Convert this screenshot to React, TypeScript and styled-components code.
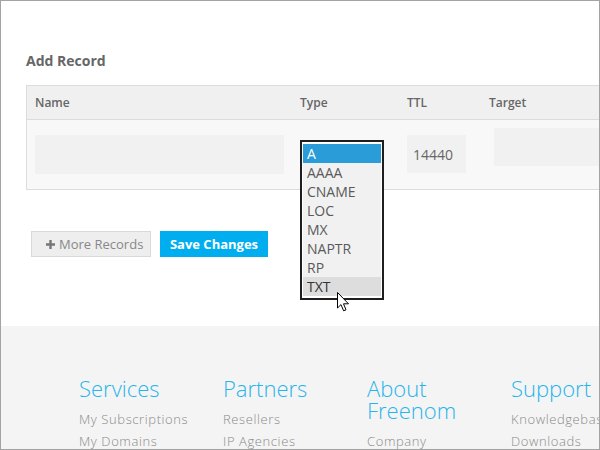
import React from "react";
import styled, { createGlobalStyle } from "styled-components";

const Global = createGlobalStyle`
  html, body { margin: 0; padding: 0; background: #fff; }
  body { font-family: "Open Sans", "Liberation Sans", sans-serif; }
  * { box-sizing: border-box; }
`;

const Frame = styled.div`
  position: relative;
  width: 600px;
  height: 450px;
  border: 1px solid #a3a3a3;
  display: flex;
  flex-direction: column;
  overflow: hidden;
  background: #fff;
`;

const Main = styled.div`
  height: 325px;
  flex: none;
  padding: 51px 0 0 25px;
`;

const Title = styled.h2`
  margin: 0;
  font-size: 14px;
  line-height: 18px;
  font-weight: 700;
  color: #666;
`;

const Table = styled.div`
  margin-top: 15px;
  border: 1px solid #dcdcdc;
  border-right: none;
`;

const Row = styled.div<{ $head?: boolean }>`
  display: grid;
  grid-template-columns: 265px 107px 82px 1fr;
  height: ${(p) => (p.$head ? "34px" : "69px")};
  background: ${(p) => (p.$head ? "#f0f0f0" : "#f8f8f8")};
  border-bottom: ${(p) => (p.$head ? "1px solid #dcdcdc" : "none")};
`;

const HeadCell = styled.div`
  display: flex;
  align-items: center;
  padding-left: 8px;
  font-size: 12px;
  font-weight: 600;
  color: #666;
`;

const Cell = styled.div`
  position: relative;
  min-width: 0;
`;

const Field = styled.div<{ $top: number; $left: number; $w?: number; $h: number }>`
  margin: ${(p) => p.$top}px 0 0 ${(p) => p.$left}px;
  width: ${(p) => (p.$w ? `${p.$w}px` : "auto")};
  height: ${(p) => p.$h}px;
  background: #f1f1f1;
  display: flex;
  align-items: center;
  padding-left: 6px;
  font-size: 14px;
  color: #666;
`;

const ListBox = styled.ul`
  position: absolute;
  top: 20px;
  left: 8px;
  width: 84px;
  margin: 0;
  padding: 2px 1px;
  list-style: none;
  border: 2px solid #1e1e1e;
  background: #fff;
  z-index: 2;
`;

const Option = styled.li<{ $state?: "selected" | "hover" }>`
  height: 19px;
  line-height: 19px;
  padding-left: 4px;
  font-size: 14px;
  color: ${(p) => (p.$state === "selected" ? "#fff" : p.$state === "hover" ? "#333" : "#5a5a5a")};
  background: ${(p) =>
    p.$state === "selected" ? "#2a9dd8" : p.$state === "hover" ? "#dddddd" : "#f1f1f1"};
`;

const Actions = styled.div`
  display: flex;
  gap: 9px;
  margin: 41px 0 0 5px;
`;

const GhostButton = styled.button`
  display: flex;
  align-items: center;
  gap: 4px;
  height: 26px;
  width: 120px;
  padding: 0 0 0 14px;
  border: 1px solid #d9d9d9;
  background: #eeeeee;
  color: #888;
  font-family: inherit;
  font-size: 13px;
`;

const PrimaryButton = styled.button`
  height: 26px;
  width: 108px;
  padding: 0;
  border: none;
  background: #00aeef;
  color: #fff;
  font-family: inherit;
  font-size: 13px;
  font-weight: 700;
`;

const Footer = styled.footer`
  flex: 1;
  background: #f4f4f4;
  display: flex;
  padding: 51px 0 0 78px;
`;

const Column = styled.div`
  width: 144px;
  flex: none;
`;

const ColTitle = styled.h3`
  margin: 0 0 9px;
  font-size: 22px;
  line-height: 22px;
  font-weight: 300;
  color: #27b4ec;
  width: 110px;
`;

const FootLink = styled.div`
  font-size: 13px;
  line-height: 22px;
  font-weight: 300;
  color: #8a8a8a;
  letter-spacing: 0.6px;
  white-space: nowrap;
`;

const Cursor = styled.svg`
  position: absolute;
  left: 336px;
  top: 291px;
  z-index: 5;
`;

const types = ["A", "AAAA", "CNAME", "LOC", "MX", "NAPTR", "RP", "TXT"];

const footer = [
  { title: "Services", links: ["My Subscriptions", "My Domains"] },
  { title: "Partners", links: ["Resellers", "IP Agencies"] },
  { title: "About Freenom", links: ["Company"] },
  { title: "Support", links: ["Knowledgebase", "Downloads"] },
];

export default function App() {
  return (
    <>
      <Global />
      <Frame>
        <Main>
          <Title>Add Record</Title>
          <Table>
            <Row $head>
              <HeadCell>Name</HeadCell>
              <HeadCell>Type</HeadCell>
              <HeadCell>TTL</HeadCell>
              <HeadCell>Target</HeadCell>
            </Row>
            <Row>
              <Cell>
                <Field $top={15} $left={8} $w={249} $h={39} />
              </Cell>
              <Cell>
                <ListBox>
                  {types.map((t, i) => (
                    <Option
                      key={t}
                      $state={i === 0 ? "selected" : i === types.length - 1 ? "hover" : undefined}
                    >
                      {t}
                    </Option>
                  ))}
                </ListBox>
              </Cell>
              <Cell>
                <Field $top={15} $left={8} $w={59} $h={38}>14440</Field>
              </Cell>
              <Cell>
                <Field $top={8} $left={13} $h={38} />
              </Cell>
            </Row>
          </Table>
          <Actions>
            <GhostButton>
              <svg width="9" height="9" viewBox="0 0 9 9">
                <path d="M3.3 0h2.4v3.3H9v2.4H5.7V9H3.3V5.7H0V3.3h3.3z" fill="#777" />
              </svg>
              More Records
            </GhostButton>
            <PrimaryButton>Save Changes</PrimaryButton>
          </Actions>
        </Main>
        <Footer>
          {footer.map((c) => (
            <Column key={c.title}>
              <ColTitle>{c.title}</ColTitle>
              {c.links.map((l) => (
                <FootLink key={l}>{l}</FootLink>
              ))}
            </Column>
          ))}
        </Footer>
        <Cursor width="13" height="20" viewBox="0 0 13 20">
          <path
            d="M0.5 0.5 L0.5 16 L4 12.6 L6.6 18.8 L9 17.8 L6.5 11.8 L11.5 11.8 Z"
            fill="#fff"
            stroke="#000"
            strokeWidth="1"
            strokeLinejoin="miter"
          />
        </Cursor>
      </Frame>
    </>
  );
}
